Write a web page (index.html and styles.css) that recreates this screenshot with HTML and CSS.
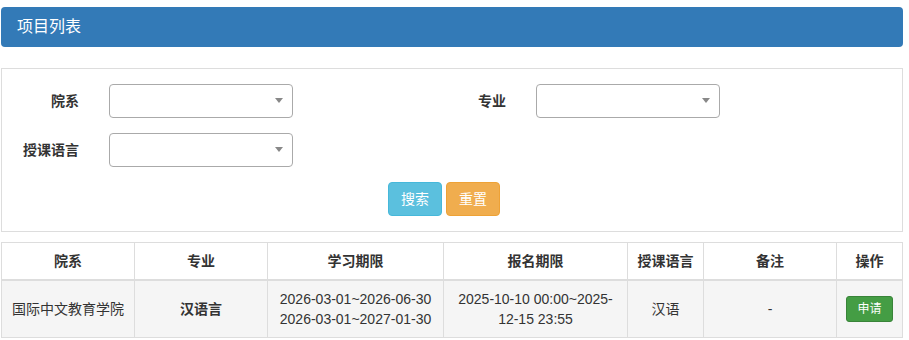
FILE: index.html
```html
<!DOCTYPE html>
<html lang="zh-CN">
<head>
    <meta charset="UTF-8">
    <meta name="viewport" content="width=device-width, initial-scale=1.0">
    <title>项目列表</title>
    <link rel="stylesheet" href="styles.css">
</head>
<body>

<div id="page">
    <div class="page-title">项目列表</div>

    <div class="search-panel">
        <div class="form-row">
            <div class="form-group">
                <label>院系</label>
                <div class="select-box"><span class="arrow"></span></div>
            </div>
            <div class="form-group">
                <label>专业</label>
                <div class="select-box"><span class="arrow"></span></div>
            </div>
        </div>
        <div class="form-row">
            <div class="form-group">
                <label>授课语言</label>
                <div class="select-box"><span class="arrow"></span></div>
            </div>
        </div>
        <div class="button-row">
            <button class="btn btn-info">搜索</button>
            <button class="btn btn-warning">重置</button>
        </div>
    </div>

    <table class="project-table">
        <colgroup>
            <col style="width: 133px">
            <col style="width: 133px">
            <col style="width: 176px">
            <col style="width: 184px">
            <col style="width: 76px">
            <col style="width: 133px">
            <col style="width: 66px">
        </colgroup>
        <thead>
            <tr>
                <th>院系</th>
                <th>专业</th>
                <th>学习期限</th>
                <th>报名期限</th>
                <th>授课语言</th>
                <th>备注</th>
                <th>操作</th>
            </tr>
        </thead>
        <tbody>
            <tr>
                <td>国际中文教育学院</td>
                <td class="major">汉语言</td>
                <td>2026-03-01~2026-06-30<br>2026-03-01~2027-01-30</td>
                <td>2025-10-10 00:00~2025-12-15 23:55</td>
                <td>汉语</td>
                <td>-</td>
                <td><button class="btn btn-success">申请</button></td>
            </tr>
        </tbody>
    </table>
</div>

</body>
</html>
```

FILE: styles.css
```css
body {
    margin: 0;
    padding: 0;
    background-color: #fff;
    color: #333;
    font-family: "Liberation Sans", "Noto Sans CJK SC", Arial, sans-serif;
    font-size: 14px;
    line-height: 20px;
}

#page {
    width: 902px;
    padding: 7px 0 0 1px;
}

.page-title {
    height: 40px;
    box-sizing: border-box;
    padding: 9px 16px;
    background-color: #337ab7;
    border-radius: 4px;
    color: #fff;
    font-size: 16px;
    line-height: 22px;
}

.search-panel {
    margin-top: 21px;
    border: 1px solid #ddd;
    padding: 15px 0;
}

.form-row {
    display: flex;
    margin-bottom: 15px;
}

.form-group {
    width: 427px;
    display: flex;
    align-items: center;
}

.form-group label {
    width: 77px;
    text-align: right;
    font-weight: bold;
    margin-right: 30px;
}

.select-box {
    position: relative;
    width: 184px;
    height: 34px;
    box-sizing: border-box;
    border: 1px solid #aaa;
    border-radius: 4px;
    background-color: #fff;
}

.select-box .arrow {
    position: absolute;
    right: 9px;
    top: 13px;
    border-style: solid;
    border-width: 5px 4px 0 4px;
    border-color: #888 transparent transparent transparent;
}

.button-row {
    display: flex;
    justify-content: center;
    gap: 4px;
    padding-right: 16px;
}

.btn {
    font-family: inherit;
    font-size: 14px;
    line-height: 20px;
    padding: 6px 12px;
    border: 1px solid transparent;
    border-radius: 4px;
    color: #fff;
    cursor: pointer;
}

.btn-info {
    background-color: #5bc0de;
    border-color: #46b8da;
}

.btn-warning {
    background-color: #f0ad4e;
    border-color: #eea236;
}

.btn-success {
    background-color: #449d44;
    border-color: #398439;
    font-size: 12px;
    line-height: 18px;
    padding: 3px 10px;
    border-radius: 3px;
}

.project-table {
    margin-top: 10px;
    width: 902px;
    table-layout: fixed;
    border-collapse: collapse;
}

.project-table th,
.project-table td {
    border: 1px solid #ddd;
    padding: 8px;
    text-align: center;
    vertical-align: middle;
}

.project-table thead th {
    border-bottom: 2px solid #ddd;
    font-weight: bold;
}

.project-table tbody tr {
    background-color: #f5f5f5;
}

.project-table td.major {
    font-weight: bold;
}
```
